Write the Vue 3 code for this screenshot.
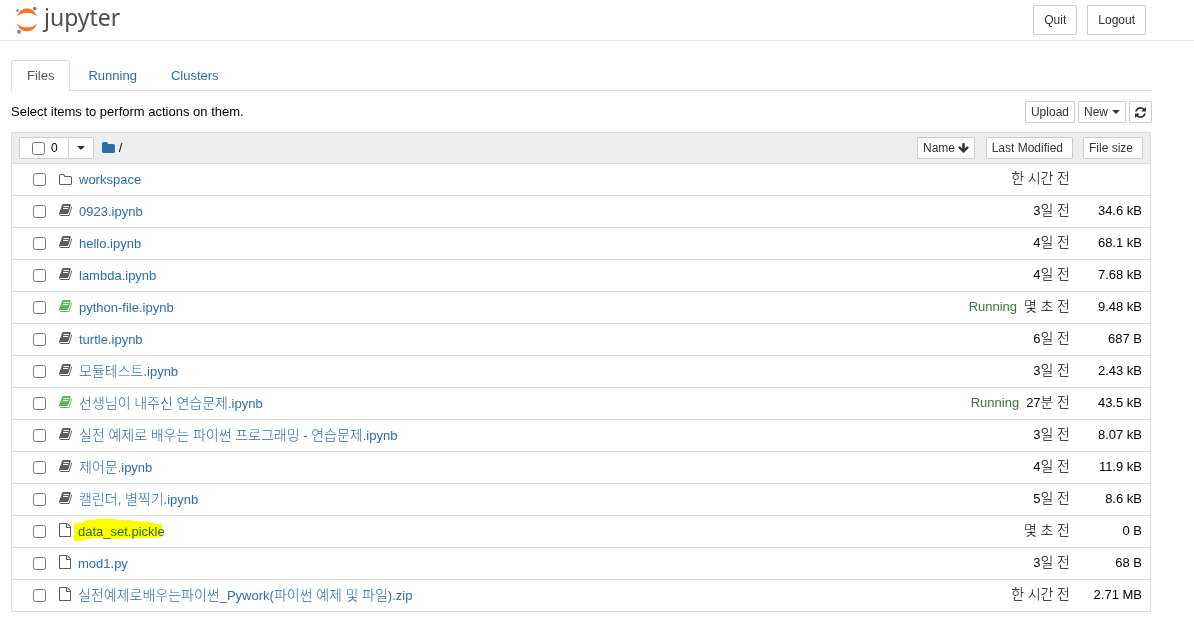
<script setup>
import { ref, computed } from 'vue'

const tabs = ['Files', 'Running', 'Clusters']
const activeTab = ref('Files')

const files = ref([
  { name: 'workspace', type: 'folder', modified: '한 시간 전', size: '' },
  { name: '0923.ipynb', type: 'book', modified: '3일 전', size: '34.6 kB' },
  { name: 'hello.ipynb', type: 'book', modified: '4일 전', size: '68.1 kB' },
  { name: 'lambda.ipynb', type: 'book', modified: '4일 전', size: '7.68 kB' },
  { name: 'python-file.ipynb', type: 'book', running: true, modified: '몇 초 전', size: '9.48 kB' },
  { name: 'turtle.ipynb', type: 'book', modified: '6일 전', size: '687 B' },
  { name: '모듈테스트.ipynb', type: 'book', modified: '3일 전', size: '2.43 kB' },
  { name: '선생님이 내주신 연습문제.ipynb', type: 'book', running: true, modified: '27분 전', size: '43.5 kB' },
  { name: '실전 예제로 배우는 파이썬 프로그래밍 - 연습문제.ipynb', type: 'book', modified: '3일 전', size: '8.07 kB' },
  { name: '제어문.ipynb', type: 'book', modified: '4일 전', size: '11.9 kB' },
  { name: '캘린더, 별찍기.ipynb', type: 'book', modified: '5일 전', size: '8.6 kB' },
  { name: 'data_set.pickle', type: 'file', marked: true, modified: '몇 초 전', size: '0 B' },
  { name: 'mod1.py', type: 'file', modified: '3일 전', size: '68 B' },
  { name: '실전예제로배우는파이썬_Pywork(파이썬 예제 및 파일).zip', type: 'file', modified: '한 시간 전', size: '2.71 MB' },
].map((f) => ({ ...f, selected: false })))

const selectedCount = computed(() => files.value.filter((f) => f.selected).length)
const allSelected = computed({
  get: () => selectedCount.value === files.value.length,
  set: (v) => files.value.forEach((f) => { f.selected = v }),
})

// Hangul runs are set one size up from the Latin text around them.
const split = (text) =>
  text.split(/([가-힣]+)/).filter(Boolean).map((t) => ({ t, ko: /[가-힣]/.test(t) }))

const icons = {
  folder: {
    w: 1664,
    d: 'M1536 1312v-704q0-40-28-68t-68-28h-704q-40 0-68-28t-28-68v-64q0-40-28-68t-68-28h-320q-40 0-68 28t-28 68v960q0 40 28 68t68 28h1216q40 0 68-28t28-68zm128-704v704q0 92-66 158t-158 66h-1216q-92 0-158-66t-66-158v-960q0-92 66-158t158-66h320q92 0 158 66t66 158v32h672q92 0 158 66t66 158z',
  },
  book: {
    w: 1664,
    d: 'M1639 478q40 57 18 129l-275 906q-19 64-76.5 107.5t-122.5 43.5h-923q-77 0-148.5-53.5t-99.5-131.5q-24-67-2-127 0-4 3-27t4-37q1-8-3-21.5t-3-19.5q2-11 8-21t16.5-23.5 16.5-23.5q23-38 45-91.5t30-91.5q3-10 .5-30t-.5-28q3-11 17-28t17-23q21-36 42-92t25-90q1-9-2.5-32t.5-28q4-13 22-30.5t22-22.5q19-26 42.5-84.5t27.5-96.5q1-8-3-25.5t-2-26.5q2-8 9-18t18-23 17-21q8-12 16.5-30.5t15-35 16-36 19.5-32 26.5-23.5 36-11.5 47.5 5.5l-1 3q38-9 51-9h761q74 0 114 56t18 130l-274 906q-36 119-71.5 153.5t-128.5 34.5h-869q-27 0-38 15-11 16-1 43 24 70 144 70h923q29 0 56-15.5t35-41.5l300-987q7-22 5-57 38 15 59 43zm-1064 2q-4 13 2 22.5t20 9.5h608q13 0 25.5-9.5t16.5-22.5l21-64q4-13-2-22.5t-20-9.5h-608q-13 0-25.5 9.5t-16.5 22.5zm-83 256q-4 13 2 22.5t20 9.5h608q13 0 25.5-9.5t16.5-22.5l21-64q4-13-2-22.5t-20-9.5h-608q-13 0-25.5 9.5t-16.5 22.5z',
  },
  file: {
    w: 1536,
    d: 'M1468 380q28 28 48 76t20 88v1152q0 40-28 68t-68 28h-1344q-40 0-68-28t-28-68v-1600q0-40 28-68t68-28h896q40 0 88 20t76 48zm-444-244v376h376q-10-29-22-41l-313-313q-12-12-41-22zm384 1528v-1024h-416q-40 0-68-28t-28-68v-416h-768v1536h1280z',
  },
}
</script>

<template>
  <div class="page">
    <header class="topbar">
      <a class="logo" href="#" aria-label="jupyter">
        <svg class="mark" viewBox="0 0 24 28" aria-hidden="true">
          <path d="M2 10.6C4 5 7.600 2.500 12 2.500S20 5 22 10.600C19.600 8 16.200 6.700 12 6.700S4.400 8 2 10.600z" fill="#f37726" />
          <path d="M2 17.400C4 23 7.600 25.200 12 25.200S20 23 22 17.400C19.600 20 16.200 21.300 12 21.300S4.400 20 2 17.400z" fill="#f37726" />
          <circle cx="19.700" cy="2.500" r="1.700" fill="#767677" />
          <circle cx="2.400" cy="4.500" r="1.200" fill="#767677" />
          <circle cx="4" cy="25.800" r="2.100" fill="#8c8c8d" />
        </svg>
        <span class="wordmark">jupyter</span>
      </a>
      <div class="session">
        <button class="btn large" type="button">Quit</button>
        <button class="btn large" type="button">Logout</button>
      </div>
    </header>

    <main class="content">
      <nav class="tabs">
        <a v-for="t in tabs" :key="t" href="#" class="tab" :class="{ active: t === activeTab }" @click.prevent="activeTab = t">{{ t }}</a>
      </nav>

      <div class="toolbar">
        <span>Select items to perform actions on them.</span>
        <div class="actions">
          <button class="btn" type="button">Upload</button>
          <button class="btn" type="button">New <i class="caret"></i></button>
          <button class="btn" type="button" aria-label="Refresh">
            <svg class="refresh" viewBox="0 0 1536 1792"><path d="M1511 1056q0 5-1 7-64 268-268 434.500t-478 166.500q-146 0-282.500-55t-243.500-157l-129 129q-19 19-45 19t-45-19-19-45v-448q0-26 19-45t45-19h448q26 0 45 19t19 45-19 45l-137 137q71 66 161 102t187 36q134 0 250-65t186-179q11-17 53-117 8-23 30-23h192q13 0 22.500 9.500t9.500 22.500zm25-800v448q0 26-19 45t-45 19h-448q-26 0-45-19t-19-45 19-45l138-138q-148-137-349-137-134 0-250 65t-186 179q-11 17-53 117-8 23-30 23h-199q-13 0-22.500-9.500t-9.500-22.500v-7q65-268 270-434.500t480-166.500q146 0 284 55.500t245 156.500l130-129q19-19 45-19t45 19 19 45z" /></svg>
          </button>
        </div>
      </div>

      <div class="listing">
        <table>
          <colgroup>
            <col />
            <col class="col-modified" />
            <col class="col-size" />
          </colgroup>
          <thead>
            <tr>
              <th scope="col">
                <div class="head-name">
                  <div class="select-group">
                    <label class="select-all"><input v-model="allSelected" type="checkbox" aria-label="Select all" />{{ selectedCount }}</label>
                    <button class="select-menu" type="button" aria-label="Select by type"><i class="caret"></i></button>
                  </div>
                  <a class="crumb" href="#" aria-label="Home">
                    <svg class="icon" viewBox="0 0 1664 1792"><path d="M1664 608v704q0 92-66 158t-158 66h-1216q-92 0-158-66t-66-158v-960q0-92 66-158t158-66h320q92 0 158 66t66 158v32h672q92 0 158 66t66 158z" /></svg>
                  </a>
                  <span>/</span>
                  <button class="btn sort-name" type="button">
                    Name
                    <svg class="arrow" viewBox="0 0 1664 1792"><path d="M1611 832q0 53-37 90l-651 652q-39 37-91 37-53 0-90-37l-651-652q-38-36-38-90 0-53 38-91l74-75q39-37 91-37 53 0 90 37l294 294v-704q0-52 38-90t90-38h128q52 0 90 38t38 90v704l294-294q37-37 90-37 52 0 91 37l75 75q37 39 37 91z" /></svg>
                  </button>
                </div>
              </th>
              <th scope="col"><button class="btn sort" type="button">Last Modified</button></th>
              <th scope="col"><button class="btn sort" type="button">File size</button></th>
            </tr>
          </thead>
          <tbody>
            <tr v-for="f in files" :key="f.name">
              <td>
                <div class="entry">
                  <input v-model="f.selected" type="checkbox" :aria-label="f.name" />
                  <svg class="icon" :class="[f.type, { running: f.running }]" :viewBox="`0 0 ${icons[f.type].w} 1792`" aria-hidden="true"><path :d="icons[f.type].d" /></svg>
                  <a class="name" href="#">
                    <span v-for="(s, i) in split(f.name)" :key="i" :class="{ ko: s.ko }">{{ s.t }}</span>
                    <svg v-if="f.marked" class="marker" viewBox="0 0 88 24" aria-hidden="true"><path d="M0 5.500L10 4V2.500L22 1.500L25 0.500H40L43 2H56L62 3L78 4L82 6H88V19H84L80 20H56L50 21H34L28 20L14 21L10 22L8 23H0z" /></svg>
                  </a>
                </div>
              </td>
              <td>
                <div class="modified">
                  <span v-if="f.running" class="status">Running</span>
                  <span class="when"><span v-for="(s, i) in split(f.modified)" :key="i" :class="{ ko: s.ko }">{{ s.t }}</span></span>
                </div>
              </td>
              <td class="size">{{ f.size }}</td>
            </tr>
          </tbody>
        </table>
      </div>
    </main>
  </div>
</template>

<style>
body {
  margin: 0;
  background: #fff;
}
</style>

<style scoped>
.page {
  font-family: "Liberation Sans", Arial, "Noto Sans CJK KR", sans-serif;
  font-size: 13px;
  line-height: 20px;
  color: #000;
}
a {
  color: #296eaa;
  text-decoration: none;
}
.topbar {
  display: flex;
  justify-content: space-between;
  align-items: center;
  box-sizing: border-box;
  height: 41px;
  padding: 0 48px 0 15px;
  border-bottom: 1px solid #e7e7e7;
}
.logo {
  display: flex;
  align-items: center;
  gap: 5px;
  color: #4e4e4e;
}
.mark {
  width: 24px;
  height: 28px;
}
.wordmark {
  padding-bottom: 6px;
  font-family: "Noto Sans", "Open Sans", sans-serif;
  font-size: 23px;
  line-height: 28px;
}
.session {
  display: flex;
  gap: 10px;
}
.btn {
  display: inline-flex;
  align-items: center;
  justify-content: center;
  box-sizing: border-box;
  height: 22px;
  margin: 0;
  padding: 0 5px;
  border: 1px solid #ccc;
  border-radius: 1px;
  background: #fff;
  color: #333;
  font-family: inherit;
  font-size: 12px;
  line-height: 18px;
  white-space: nowrap;
}
.btn.large {
  height: 30px;
  padding: 0 10px;
}
.caret {
  width: 0;
  border-top: 4px solid #333;
  border-left: 4px solid transparent;
  border-right: 4px solid transparent;
}
.btn .caret {
  margin-left: 4px;
}
.refresh {
  width: 11px;
  height: 13px;
  fill: #333;
}
.arrow {
  width: 11px;
  height: 12px;
  margin: 0 0 1px 3px;
  fill: #333;
}
.content {
  margin: 19px 43px 29px 11px;
}
.tabs {
  display: flex;
  gap: 2px;
  border-bottom: 1px solid #ddd;
}
.tab {
  box-sizing: border-box;
  height: 30px;
  padding: 5px 15px;
  border: 1px solid transparent;
  border-bottom: 0;
}
.tab.active {
  height: 31px;
  margin-bottom: -1px;
  border-color: #ddd;
  border-radius: 2px 2px 0 0;
  background: #fff;
  color: #555;
}
.toolbar {
  display: flex;
  justify-content: space-between;
  align-items: center;
  height: 22px;
  margin: 10px -1px 9px 0;
}
.actions {
  display: flex;
  gap: 3px;
}
.listing {
  border: 1px solid #ddd;
  border-radius: 1px;
}
table {
  width: 100%;
  table-layout: fixed;
  border-spacing: 0;
}
.col-modified {
  width: 98px;
}
.col-size {
  width: 77px;
}
th,
td {
  box-sizing: border-box;
  padding: 0;
  border-bottom: 1px solid #ddd;
  font-weight: normal;
  text-align: left;
}
th {
  height: 31px;
  background: #eee;
}
th:nth-child(n + 2) {
  text-align: right;
}
th:last-child {
  padding-right: 7px;
}
.sort {
  padding: 0 9px 0 5px;
  vertical-align: middle;
}
td {
  height: 32px;
}
tbody tr:last-child td {
  height: 31px;
  border-bottom: 0;
}
.head-name {
  display: flex;
  align-items: center;
  padding-left: 7px;
}
.select-group {
  display: flex;
  box-sizing: border-box;
  height: 22px;
  border: 1px solid #ccc;
  border-radius: 1px;
  background: #fff;
}
.select-all {
  display: flex;
  align-items: center;
  gap: 6px;
  padding: 0 10px 0 12px;
  font-size: 12px;
  color: #000;
}
input {
  width: 13px;
  height: 13px;
  margin: 0;
}
.select-menu {
  display: flex;
  align-items: center;
  padding: 0 8px;
  border: 0;
  border-left: 1px solid #ccc;
  background: #fff;
}
.crumb {
  display: flex;
  margin: 0 4px 0 8px;
}
.crumb .icon {
  fill: #296eaa;
}
.sort-name {
  margin-left: auto;
}
.entry {
  display: flex;
  align-items: center;
  padding-left: 21px;
}
.icon {
  width: 13px;
  height: 14px;
  fill: #5e5e5e;
}
.entry .icon {
  margin: 0 7px 0 13px;
}
.entry .book {
  margin-bottom: 3px;
}
.entry .file {
  width: 12px;
  margin-bottom: 4px;
}
.icon.running {
  fill: #5cb85c;
}
.name {
  position: relative;
  white-space: pre;
}
.ko {
  font-size: 14px;
  font-weight: 300;
}
.marker {
  position: absolute;
  left: -4px;
  top: -4px;
  width: 88px;
  height: 24px;
  fill: #ff0;
  mix-blend-mode: multiply;
}
.modified {
  display: flex;
  justify-content: flex-end;
  align-items: baseline;
  gap: 7px;
  padding: 0 3px 2px 0;
  white-space: pre;
}
.status {
  color: #3c763d;
}
.size {
  padding: 0 8px 2px 0;
  text-align: right;
}
</style>
